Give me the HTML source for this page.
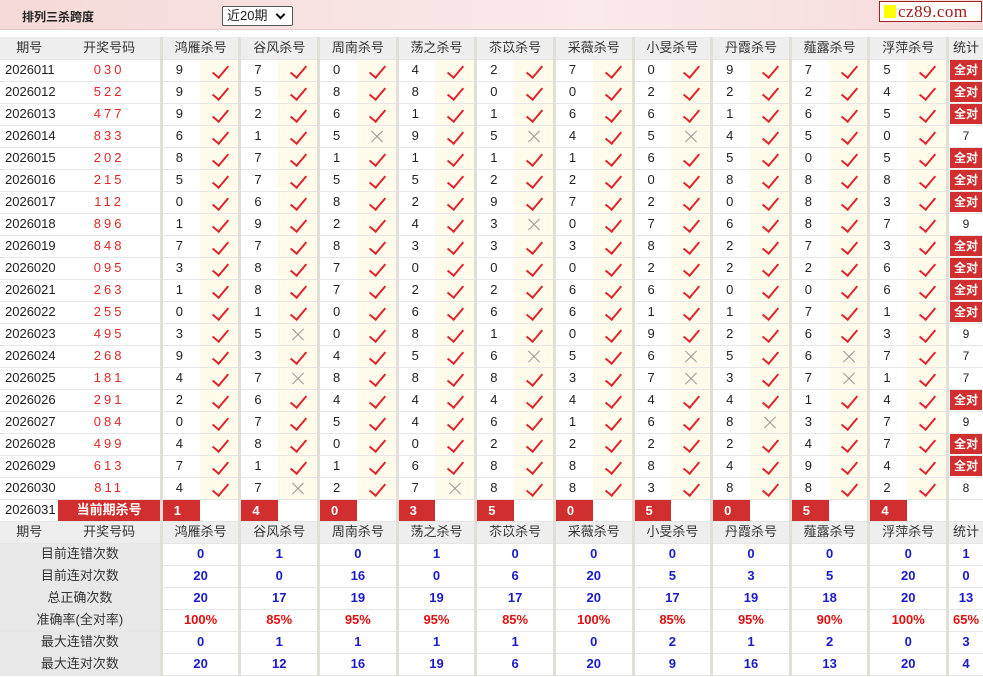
<!DOCTYPE html>
<html><head><meta charset="utf-8"><style>
*{margin:0;padding:0;box-sizing:border-box}
body{width:983px;height:677px;background:#fff;font-family:"Liberation Sans","Noto Sans CJK SC",sans-serif;font-size:13px;color:#222;position:relative;overflow:hidden}
.top{position:absolute;left:0;top:0;width:983px;height:30px;background:linear-gradient(90deg,#f6d9d9,#fbeaea 60%,#f6dada);border-bottom:1px solid #e6caca}
.title{position:absolute;left:22px;top:8px;font-weight:bold;font-size:12px;color:#222}
.sel{position:absolute;left:222px;top:6px;width:71px;height:20px;border:1px solid #555;border-radius:2px;background:#fff;font-size:13px;padding-left:4px;line-height:18px}
.sel:after{content:"";position:absolute;right:8px;top:4px;width:5px;height:5px;border-right:2px solid #111;border-bottom:2px solid #111;transform:rotate(45deg)}
.logo{position:absolute;left:879px;top:1px;width:103px;height:21px;background:#fff;border:1px solid #a02020;font-family:"Liberation Serif",serif;font-size:17px;color:#a01818;line-height:19px;padding-left:18px;letter-spacing:0.5px}
.logo:before{content:"";position:absolute;left:4px;top:3px;width:12px;height:13px;background:#ff0}
table{position:absolute;left:0;top:37px;border-collapse:collapse;table-layout:fixed;width:983px}
td{height:22px;max-height:22px;line-height:20px;border-bottom:1px solid #e6e6e6;text-align:center;padding:0;white-space:nowrap;position:relative;overflow:hidden}
tr{height:22px}
td.n{border-left:3px solid #e2dfd6;text-align:left;padding-left:13px}
td.k{background:#fffbea}
tr.h td{background:#eeeeee;color:#333}
tr.h td.g{border-left:3px solid #e2dfd6}
td.p{text-align:left;padding-left:5px}
td.d{color:#e02828;letter-spacing:3px}
td.s{border-left:3px solid #e2dfd6;font-size:12px}
td.s b{display:block;margin:0 1px;background:#d12f2f;color:#fff;height:20px;line-height:20px;font-size:12px}
.y:before{content:"";position:absolute;left:16px;top:2px;width:7px;height:14px;border-right:2px solid #e0242e;border-bottom:2px solid #e0242e;transform:rotate(40deg)}
.x:before,.x:after{content:"";position:absolute;left:12px;top:10px;width:16px;height:1px;background:#999;transform:rotate(45deg)}
.x:after{transform:rotate(-45deg)}
td.cur{background:#d12f2f;color:#fff;font-weight:bold}
td.kn{border-left:3px solid #e2dfd6;padding:0}
td.kn b{display:block;background:#d12f2f;color:#fff;height:21px;line-height:21px;text-align:left;padding-left:11px}
td.lb{background:#e8e8e8;color:#333}
td.v{border-left:3px solid #e2dfd6;color:#1a1acc;font-weight:bold}
tr.r td.v{color:#e01010}
</style></head><body>
<div class="top"><div class="title">排列三杀跨度</div><div class="sel">近20期</div><div class="logo">cz89.com</div></div>
<table>
<colgroup><col style="width:58px"><col style="width:102px"><col style="width:38px"><col style="width:40px"><col style="width:38px"><col style="width:40px"><col style="width:38px"><col style="width:40px"><col style="width:38px"><col style="width:40px"><col style="width:38px"><col style="width:40px"><col style="width:38px"><col style="width:40px"><col style="width:38px"><col style="width:40px"><col style="width:38px"><col style="width:40px"><col style="width:38px"><col style="width:40px"><col style="width:38px"><col style="width:40px"><col style="width:35px"></colgroup>
<tr class="h"><td>期号</td><td>开奖号码</td><td class="g" colspan="2">鸿雁杀号</td><td class="g" colspan="2">谷风杀号</td><td class="g" colspan="2">周南杀号</td><td class="g" colspan="2">荡之杀号</td><td class="g" colspan="2">苶苡杀号</td><td class="g" colspan="2">采薇杀号</td><td class="g" colspan="2">小旻杀号</td><td class="g" colspan="2">丹霞杀号</td><td class="g" colspan="2">薤露杀号</td><td class="g" colspan="2">浮萍杀号</td><td class="g">统计</td></tr>
<tr><td class="p">2026011</td><td class="d">030</td><td class="n">9</td><td class="k y"></td><td class="n">7</td><td class="k y"></td><td class="n">0</td><td class="k y"></td><td class="n">4</td><td class="k y"></td><td class="n">2</td><td class="k y"></td><td class="n">7</td><td class="k y"></td><td class="n">0</td><td class="k y"></td><td class="n">9</td><td class="k y"></td><td class="n">7</td><td class="k y"></td><td class="n">5</td><td class="k y"></td><td class="s"><b>全对</b></td></tr>
<tr><td class="p">2026012</td><td class="d">522</td><td class="n">9</td><td class="k y"></td><td class="n">5</td><td class="k y"></td><td class="n">8</td><td class="k y"></td><td class="n">8</td><td class="k y"></td><td class="n">0</td><td class="k y"></td><td class="n">0</td><td class="k y"></td><td class="n">2</td><td class="k y"></td><td class="n">2</td><td class="k y"></td><td class="n">2</td><td class="k y"></td><td class="n">4</td><td class="k y"></td><td class="s"><b>全对</b></td></tr>
<tr><td class="p">2026013</td><td class="d">477</td><td class="n">9</td><td class="k y"></td><td class="n">2</td><td class="k y"></td><td class="n">6</td><td class="k y"></td><td class="n">1</td><td class="k y"></td><td class="n">1</td><td class="k y"></td><td class="n">6</td><td class="k y"></td><td class="n">6</td><td class="k y"></td><td class="n">1</td><td class="k y"></td><td class="n">6</td><td class="k y"></td><td class="n">5</td><td class="k y"></td><td class="s"><b>全对</b></td></tr>
<tr><td class="p">2026014</td><td class="d">833</td><td class="n">6</td><td class="k y"></td><td class="n">1</td><td class="k y"></td><td class="n">5</td><td class="k x"></td><td class="n">9</td><td class="k y"></td><td class="n">5</td><td class="k x"></td><td class="n">4</td><td class="k y"></td><td class="n">5</td><td class="k x"></td><td class="n">4</td><td class="k y"></td><td class="n">5</td><td class="k y"></td><td class="n">0</td><td class="k y"></td><td class="s">7</td></tr>
<tr><td class="p">2026015</td><td class="d">202</td><td class="n">8</td><td class="k y"></td><td class="n">7</td><td class="k y"></td><td class="n">1</td><td class="k y"></td><td class="n">1</td><td class="k y"></td><td class="n">1</td><td class="k y"></td><td class="n">1</td><td class="k y"></td><td class="n">6</td><td class="k y"></td><td class="n">5</td><td class="k y"></td><td class="n">0</td><td class="k y"></td><td class="n">5</td><td class="k y"></td><td class="s"><b>全对</b></td></tr>
<tr><td class="p">2026016</td><td class="d">215</td><td class="n">5</td><td class="k y"></td><td class="n">7</td><td class="k y"></td><td class="n">5</td><td class="k y"></td><td class="n">5</td><td class="k y"></td><td class="n">2</td><td class="k y"></td><td class="n">2</td><td class="k y"></td><td class="n">0</td><td class="k y"></td><td class="n">8</td><td class="k y"></td><td class="n">8</td><td class="k y"></td><td class="n">8</td><td class="k y"></td><td class="s"><b>全对</b></td></tr>
<tr><td class="p">2026017</td><td class="d">112</td><td class="n">0</td><td class="k y"></td><td class="n">6</td><td class="k y"></td><td class="n">8</td><td class="k y"></td><td class="n">2</td><td class="k y"></td><td class="n">9</td><td class="k y"></td><td class="n">7</td><td class="k y"></td><td class="n">2</td><td class="k y"></td><td class="n">0</td><td class="k y"></td><td class="n">8</td><td class="k y"></td><td class="n">3</td><td class="k y"></td><td class="s"><b>全对</b></td></tr>
<tr><td class="p">2026018</td><td class="d">896</td><td class="n">1</td><td class="k y"></td><td class="n">9</td><td class="k y"></td><td class="n">2</td><td class="k y"></td><td class="n">4</td><td class="k y"></td><td class="n">3</td><td class="k x"></td><td class="n">0</td><td class="k y"></td><td class="n">7</td><td class="k y"></td><td class="n">6</td><td class="k y"></td><td class="n">8</td><td class="k y"></td><td class="n">7</td><td class="k y"></td><td class="s">9</td></tr>
<tr><td class="p">2026019</td><td class="d">848</td><td class="n">7</td><td class="k y"></td><td class="n">7</td><td class="k y"></td><td class="n">8</td><td class="k y"></td><td class="n">3</td><td class="k y"></td><td class="n">3</td><td class="k y"></td><td class="n">3</td><td class="k y"></td><td class="n">8</td><td class="k y"></td><td class="n">2</td><td class="k y"></td><td class="n">7</td><td class="k y"></td><td class="n">3</td><td class="k y"></td><td class="s"><b>全对</b></td></tr>
<tr><td class="p">2026020</td><td class="d">095</td><td class="n">3</td><td class="k y"></td><td class="n">8</td><td class="k y"></td><td class="n">7</td><td class="k y"></td><td class="n">0</td><td class="k y"></td><td class="n">0</td><td class="k y"></td><td class="n">0</td><td class="k y"></td><td class="n">2</td><td class="k y"></td><td class="n">2</td><td class="k y"></td><td class="n">2</td><td class="k y"></td><td class="n">6</td><td class="k y"></td><td class="s"><b>全对</b></td></tr>
<tr><td class="p">2026021</td><td class="d">263</td><td class="n">1</td><td class="k y"></td><td class="n">8</td><td class="k y"></td><td class="n">7</td><td class="k y"></td><td class="n">2</td><td class="k y"></td><td class="n">2</td><td class="k y"></td><td class="n">6</td><td class="k y"></td><td class="n">6</td><td class="k y"></td><td class="n">0</td><td class="k y"></td><td class="n">0</td><td class="k y"></td><td class="n">6</td><td class="k y"></td><td class="s"><b>全对</b></td></tr>
<tr><td class="p">2026022</td><td class="d">255</td><td class="n">0</td><td class="k y"></td><td class="n">1</td><td class="k y"></td><td class="n">0</td><td class="k y"></td><td class="n">6</td><td class="k y"></td><td class="n">6</td><td class="k y"></td><td class="n">6</td><td class="k y"></td><td class="n">1</td><td class="k y"></td><td class="n">1</td><td class="k y"></td><td class="n">7</td><td class="k y"></td><td class="n">1</td><td class="k y"></td><td class="s"><b>全对</b></td></tr>
<tr><td class="p">2026023</td><td class="d">495</td><td class="n">3</td><td class="k y"></td><td class="n">5</td><td class="k x"></td><td class="n">0</td><td class="k y"></td><td class="n">8</td><td class="k y"></td><td class="n">1</td><td class="k y"></td><td class="n">0</td><td class="k y"></td><td class="n">9</td><td class="k y"></td><td class="n">2</td><td class="k y"></td><td class="n">6</td><td class="k y"></td><td class="n">3</td><td class="k y"></td><td class="s">9</td></tr>
<tr><td class="p">2026024</td><td class="d">268</td><td class="n">9</td><td class="k y"></td><td class="n">3</td><td class="k y"></td><td class="n">4</td><td class="k y"></td><td class="n">5</td><td class="k y"></td><td class="n">6</td><td class="k x"></td><td class="n">5</td><td class="k y"></td><td class="n">6</td><td class="k x"></td><td class="n">5</td><td class="k y"></td><td class="n">6</td><td class="k x"></td><td class="n">7</td><td class="k y"></td><td class="s">7</td></tr>
<tr><td class="p">2026025</td><td class="d">181</td><td class="n">4</td><td class="k y"></td><td class="n">7</td><td class="k x"></td><td class="n">8</td><td class="k y"></td><td class="n">8</td><td class="k y"></td><td class="n">8</td><td class="k y"></td><td class="n">3</td><td class="k y"></td><td class="n">7</td><td class="k x"></td><td class="n">3</td><td class="k y"></td><td class="n">7</td><td class="k x"></td><td class="n">1</td><td class="k y"></td><td class="s">7</td></tr>
<tr><td class="p">2026026</td><td class="d">291</td><td class="n">2</td><td class="k y"></td><td class="n">6</td><td class="k y"></td><td class="n">4</td><td class="k y"></td><td class="n">4</td><td class="k y"></td><td class="n">4</td><td class="k y"></td><td class="n">4</td><td class="k y"></td><td class="n">4</td><td class="k y"></td><td class="n">4</td><td class="k y"></td><td class="n">1</td><td class="k y"></td><td class="n">4</td><td class="k y"></td><td class="s"><b>全对</b></td></tr>
<tr><td class="p">2026027</td><td class="d">084</td><td class="n">0</td><td class="k y"></td><td class="n">7</td><td class="k y"></td><td class="n">5</td><td class="k y"></td><td class="n">4</td><td class="k y"></td><td class="n">6</td><td class="k y"></td><td class="n">1</td><td class="k y"></td><td class="n">6</td><td class="k y"></td><td class="n">8</td><td class="k x"></td><td class="n">3</td><td class="k y"></td><td class="n">7</td><td class="k y"></td><td class="s">9</td></tr>
<tr><td class="p">2026028</td><td class="d">499</td><td class="n">4</td><td class="k y"></td><td class="n">8</td><td class="k y"></td><td class="n">0</td><td class="k y"></td><td class="n">0</td><td class="k y"></td><td class="n">2</td><td class="k y"></td><td class="n">2</td><td class="k y"></td><td class="n">2</td><td class="k y"></td><td class="n">2</td><td class="k y"></td><td class="n">4</td><td class="k y"></td><td class="n">7</td><td class="k y"></td><td class="s"><b>全对</b></td></tr>
<tr><td class="p">2026029</td><td class="d">613</td><td class="n">7</td><td class="k y"></td><td class="n">1</td><td class="k y"></td><td class="n">1</td><td class="k y"></td><td class="n">6</td><td class="k y"></td><td class="n">8</td><td class="k y"></td><td class="n">8</td><td class="k y"></td><td class="n">8</td><td class="k y"></td><td class="n">4</td><td class="k y"></td><td class="n">9</td><td class="k y"></td><td class="n">4</td><td class="k y"></td><td class="s"><b>全对</b></td></tr>
<tr><td class="p">2026030</td><td class="d">811</td><td class="n">4</td><td class="k y"></td><td class="n">7</td><td class="k x"></td><td class="n">2</td><td class="k y"></td><td class="n">7</td><td class="k x"></td><td class="n">8</td><td class="k y"></td><td class="n">8</td><td class="k y"></td><td class="n">3</td><td class="k y"></td><td class="n">8</td><td class="k y"></td><td class="n">8</td><td class="k y"></td><td class="n">2</td><td class="k y"></td><td class="s">8</td></tr>
<tr><td class="p">2026031</td><td class="cur">当前期杀号</td><td class="kn"><b>1</b></td><td></td><td class="kn"><b>4</b></td><td></td><td class="kn"><b>0</b></td><td></td><td class="kn"><b>3</b></td><td></td><td class="kn"><b>5</b></td><td></td><td class="kn"><b>0</b></td><td></td><td class="kn"><b>5</b></td><td></td><td class="kn"><b>0</b></td><td></td><td class="kn"><b>5</b></td><td></td><td class="kn"><b>4</b></td><td></td><td class="s"></td></tr>
<tr class="h"><td>期号</td><td>开奖号码</td><td class="g" colspan="2">鸿雁杀号</td><td class="g" colspan="2">谷风杀号</td><td class="g" colspan="2">周南杀号</td><td class="g" colspan="2">荡之杀号</td><td class="g" colspan="2">苶苡杀号</td><td class="g" colspan="2">采薇杀号</td><td class="g" colspan="2">小旻杀号</td><td class="g" colspan="2">丹霞杀号</td><td class="g" colspan="2">薤露杀号</td><td class="g" colspan="2">浮萍杀号</td><td class="g">统计</td></tr>
<tr><td class="lb" colspan="2">目前连错次数</td><td class="v" colspan="2">0</td><td class="v" colspan="2">1</td><td class="v" colspan="2">0</td><td class="v" colspan="2">1</td><td class="v" colspan="2">0</td><td class="v" colspan="2">0</td><td class="v" colspan="2">0</td><td class="v" colspan="2">0</td><td class="v" colspan="2">0</td><td class="v" colspan="2">0</td><td class="v">1</td></tr>
<tr><td class="lb" colspan="2">目前连对次数</td><td class="v" colspan="2">20</td><td class="v" colspan="2">0</td><td class="v" colspan="2">16</td><td class="v" colspan="2">0</td><td class="v" colspan="2">6</td><td class="v" colspan="2">20</td><td class="v" colspan="2">5</td><td class="v" colspan="2">3</td><td class="v" colspan="2">5</td><td class="v" colspan="2">20</td><td class="v">0</td></tr>
<tr><td class="lb" colspan="2">总正确次数</td><td class="v" colspan="2">20</td><td class="v" colspan="2">17</td><td class="v" colspan="2">19</td><td class="v" colspan="2">19</td><td class="v" colspan="2">17</td><td class="v" colspan="2">20</td><td class="v" colspan="2">17</td><td class="v" colspan="2">19</td><td class="v" colspan="2">18</td><td class="v" colspan="2">20</td><td class="v">13</td></tr>
<tr class="r"><td class="lb" colspan="2">准确率(全对率)</td><td class="v" colspan="2">100%</td><td class="v" colspan="2">85%</td><td class="v" colspan="2">95%</td><td class="v" colspan="2">95%</td><td class="v" colspan="2">85%</td><td class="v" colspan="2">100%</td><td class="v" colspan="2">85%</td><td class="v" colspan="2">95%</td><td class="v" colspan="2">90%</td><td class="v" colspan="2">100%</td><td class="v">65%</td></tr>
<tr><td class="lb" colspan="2">最大连错次数</td><td class="v" colspan="2">0</td><td class="v" colspan="2">1</td><td class="v" colspan="2">1</td><td class="v" colspan="2">1</td><td class="v" colspan="2">1</td><td class="v" colspan="2">0</td><td class="v" colspan="2">2</td><td class="v" colspan="2">1</td><td class="v" colspan="2">2</td><td class="v" colspan="2">0</td><td class="v">3</td></tr>
<tr><td class="lb" colspan="2">最大连对次数</td><td class="v" colspan="2">20</td><td class="v" colspan="2">12</td><td class="v" colspan="2">16</td><td class="v" colspan="2">19</td><td class="v" colspan="2">6</td><td class="v" colspan="2">20</td><td class="v" colspan="2">9</td><td class="v" colspan="2">16</td><td class="v" colspan="2">13</td><td class="v" colspan="2">20</td><td class="v">4</td></tr>
</table>
</body></html>
